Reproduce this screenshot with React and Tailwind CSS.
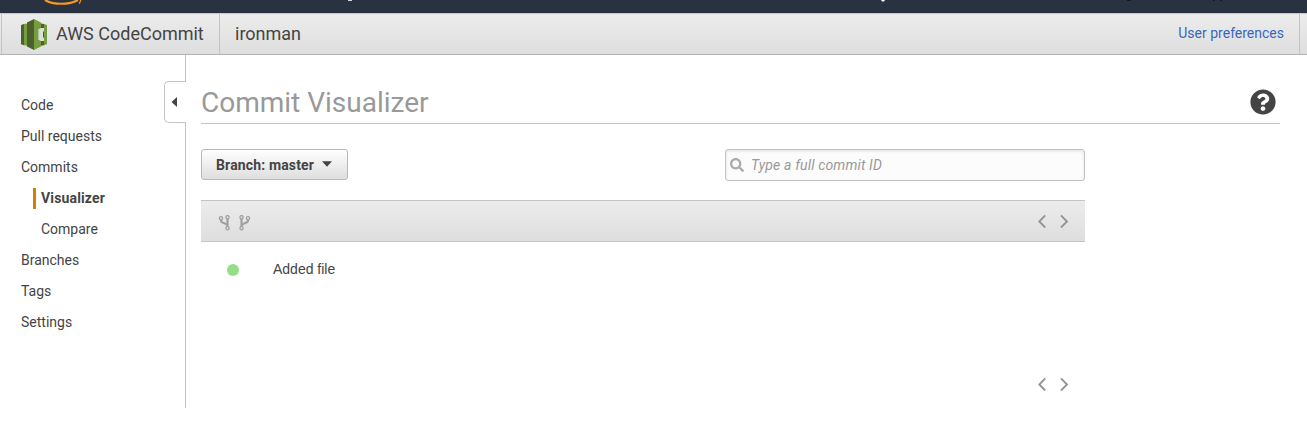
import React from "react";
import { FaQuestionCircle, FaSearch } from "react-icons/fa";

function ServiceLogo() {
  return (
    <svg width="26" height="31" viewBox="0 0 26 31" className="block shrink-0">
      <path d="M0 6 3 5v21.300L0 25.300z" fill="#4b612c" />
      <path d="M3 5l3.500-.5v22.300L3 26.300z" fill="#759c3e" />
      <path d="M6 3.500 13 0v31l-7-3.500z" fill="#4b612c" />
      <path d="M13 0l7 3.500v24L13 31z" fill="#759c3e" />
      <path d="M20 4.500l3 .5v21.300l-3 .5z" fill="#4b612c" />
      <path d="M23 5l3 1v19.300l-3 1z" fill="#759c3e" />
      <path d="M17 10.500l3-1.500h3v3.500h-1v6h1V22h-3l-3-1.500z" fill="#dcdfd8" />
      <path d="M17 10.500l1.200-.6v11.200l-1.200-.6z" fill="#b5c1a4" />
    </svg>
  );
}

function ForkIcon({ flipped }) {
  return (
    <svg width="12" height="16" viewBox="0 0 12 16" fill="none" stroke="#a0a0a0" className={flipped ? "block -scale-x-100" : "block"}>
      <path d="M9.500 4v8M3 5v.5c0 3.500 6.500 2 6.500 5.500" strokeWidth="2.200" />
      <g fill="#e6e6e6" strokeWidth="1.300">
        <circle cx="3" cy="3.200" r="1.600" />
        <circle cx="9.500" cy="2.200" r="1.600" />
        <circle cx="9.500" cy="13.300" r="1.600" />
      </g>
    </svg>
  );
}

function Pager() {
  return (
    <div className="flex gap-[13px]">
      <button aria-label="Previous">
        <svg width="9" height="14" viewBox="0 0 9 14" fill="none" stroke="#949494" strokeWidth="1.900" className="block">
          <path d="M7.200 1.300 1.300 7.500l5.900 6" />
        </svg>
      </button>
      <button aria-label="Next">
        <svg width="9" height="14" viewBox="0 0 9 14" fill="none" stroke="#949494" strokeWidth="1.900" className="block">
          <path d="M1 1.300l6 6.200-6 6" />
        </svg>
      </button>
    </div>
  );
}

const links = [
  { label: "Code" },
  { label: "Pull requests" },
  { label: "Commits" },
  { label: "Visualizer", nested: true, active: true },
  { label: "Compare", nested: true },
  { label: "Branches" },
  { label: "Tags" },
  { label: "Settings" },
];

function Sidebar() {
  return (
    <aside className="relative h-[353px] w-[186px] shrink-0 border-r border-[#c4c4c4] pt-[35px]">
      <nav className="text-[14px] leading-[31px]">
        {links.map((l) => (
          <a key={l.label} className={"flex h-[31px] items-center " + (l.nested ? "pl-[33px]" : "pl-[21px]")}>
            {l.nested && <span className={"mr-[5px] h-[21px] w-[3px] " + (l.active ? "bg-[#dd7c00]" : "")} />}
            <span className={l.active ? "font-bold tracking-[0.15px]" : ""}>{l.label}</span>
          </a>
        ))}
      </nav>
      <button
        aria-label="Collapse"
        className="absolute -right-px top-[26px] flex h-[42px] w-[22px] items-center rounded-l-[5px] border border-r-0 border-[#c4c4c4] bg-white pl-[6px]"
      >
        <svg width="6" height="10" viewBox="0 0 6 10" className="block"><path d="M6 0v10L.5 5z" fill="#444" /></svg>
      </button>
    </aside>
  );
}

export default function App() {
  return (
    <div className="h-[423px] w-[1307px] overflow-hidden bg-white font-[family-name:Roboto,sans-serif] text-[#444]">
      <div className="h-[13px] overflow-hidden bg-[#293241]">
        <svg width="1307" height="13" viewBox="0 0 1307 13" className="block">
          <path d="M45 0C53 5 69 5 78 0" fill="none" stroke="#f7981f" strokeWidth="2.200" />
          <path d="M80.800 0q-.3 2-1.800 3.500" fill="none" stroke="#f7981f" strokeWidth="1.200" />
          <path d="M348 0h4" stroke="#fff" strokeWidth="1.600" />
          <path d="M881 0h4l-1 1.500h-2z" fill="#fff" />
          <path d="M1127 0h4M1213 0h1.500M1220 0h1.500" stroke="#080b10" strokeWidth="1.500" />
        </svg>
      </div>
      <header className="flex h-[42px] border-y border-b-[#b3b3b3] border-t-[#c0c9d2] bg-linear-to-b from-[#ececec] to-[#dedede]">
        <div className="ml-px flex w-[219px] items-center border-x border-[#c4c4c4] pl-[19px]">
          <ServiceLogo />
          <span className="ml-[9px] whitespace-nowrap text-[18px] leading-none">AWS CodeCommit</span>
        </div>
        <div className="flex flex-1 items-center pl-[15px] text-[18px] leading-none">ironman</div>
        <div className="mr-[7px] flex items-center border-r border-[#c4c4c4] pb-[2px] pr-[15px] text-[14px] leading-none text-[#3a66bb]">User preferences</div>
      </header>
      <div className="flex">
        <Sidebar />
        <main className="ml-[15px] w-[1079px]">
          <div className="flex h-[69px] items-center justify-between border-b border-[#c4c4c4] pr-1 pt-[26px]">
            <h1 className="pt-[2px] text-[28px] leading-none text-[#999]">Commit Visualizer</h1>
            <FaQuestionCircle size={26} color="#444" />
          </div>
          <div className="w-[884px]">
            <div className="flex h-[76px] items-start justify-between pt-[25px]">
              <button className="flex h-[31px] w-[147px] items-center rounded-[3px] border border-[#b8b8b8] bg-linear-to-b from-white to-[#dedede] pl-[14px] text-[14px] font-bold leading-none">
                <span className="tracking-[0.15px]">Branch: master</span>
                <svg width="10" height="6" viewBox="0 0 10 6" className="-mt-px ml-2 block"><path d="M0 .3h10L5 5.800z" fill="#444" /></svg>
              </button>
              <label className="flex h-8 w-[360px] items-center rounded-[3px] border border-[#c4c4c4] bg-[#fcfcfc] pl-[4px] shadow-[inset_0_1px_3px_#ddd]">
                <FaSearch size={14} color="#aaa" />
                <input placeholder="Type a full commit ID" className="ml-[7px] flex-1 bg-transparent text-[14px] italic tracking-[0.15px] outline-none placeholder:text-[#999]" />
              </label>
            </div>
            <div className="flex h-[42px] items-center justify-between border-y border-[#c4c4c4] bg-linear-to-b from-[#ececec] to-[#dedede] pl-[17px] pr-4">
              <div className="flex gap-[9px] pt-[3px]">
                <ForkIcon />
                <ForkIcon flipped />
              </div>
              <Pager />
            </div>
            <div className="flex h-[56px] items-center pl-[26px]">
              <span className="h-3 w-3 rounded-full bg-[#92df88]" />
              <span className="ml-[34px] pb-[2px] font-[family-name:Arial,'Liberation_Sans',sans-serif] text-[14px]">Added file</span>
            </div>
            <div className="flex justify-end pr-4 pt-[79px]">
              <Pager />
            </div>
          </div>
        </main>
      </div>
    </div>
  );
}
